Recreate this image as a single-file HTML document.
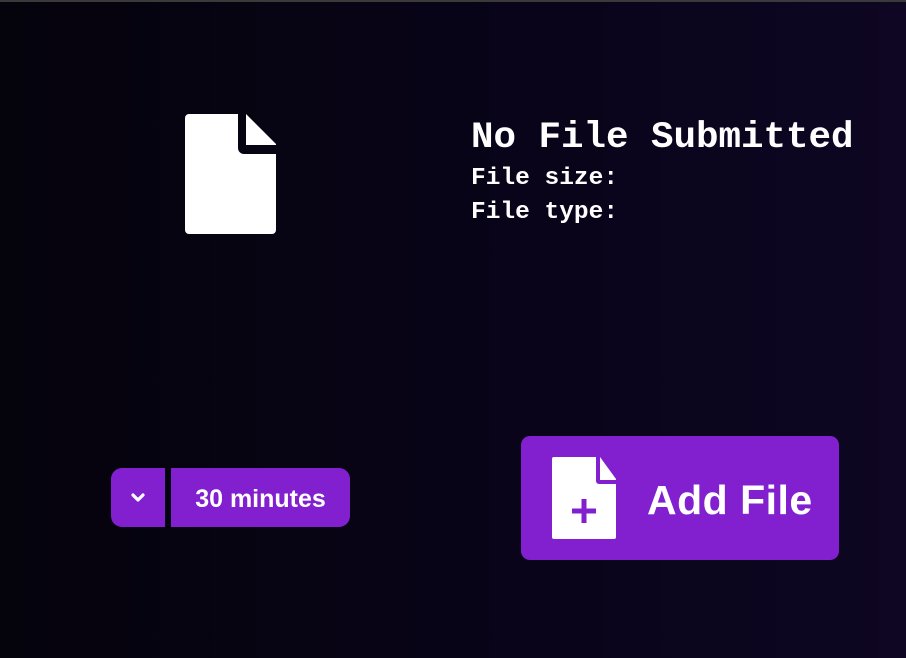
<!DOCTYPE html>
<html><head><style>
html,body{margin:0;padding:0;}
body{width:906px;height:658px;overflow:hidden;position:relative;background:linear-gradient(90deg,#05030c 0%,#09041a 60%,#0e0622 100%);border-top:2px solid #3a3a3a;box-sizing:border-box;font-family:"Liberation Sans",sans-serif;}
.mono{position:absolute;font-family:"Liberation Mono",monospace;font-weight:bold;color:#fff;white-space:nowrap;}
.btn{position:absolute;background:#8220cf;color:#fff;font-weight:bold;}
</style></head><body>
<svg style="position:absolute;left:185px;top:110px" width="92" height="124" viewBox="0 0 92 124">
<path d="M4 2 H53 V36 a6 6 0 0 0 6 6 H91 V118 a4 4 0 0 1 -4 4 H4 a4 4 0 0 1 -4 -4 V6 a4 4 0 0 1 4 -4 Z" fill="#fff"/>
<path d="M61 2 L91 32 V33 H61 Z" fill="#fff"/>
</svg>
<div class="mono" style="left:471px;top:114px;font-size:37.5px;line-height:44px;">No File Submitted</div>
<div class="mono" style="left:471px;top:163px;font-size:24.5px;line-height:28px;">File size:</div>
<div class="mono" style="left:471px;top:197px;font-size:24.5px;line-height:28px;">File type:</div>
<div class="btn" style="left:111px;top:466px;width:54px;height:59px;border-radius:11px 0 0 11px;">
<svg style="position:absolute;left:20px;top:24px" width="14" height="12" viewBox="0 0 14 12"><path d="M2 3 L7 8 L12 3" stroke="#fff" stroke-width="3.2" fill="none" stroke-linecap="round" stroke-linejoin="round"/></svg>
</div>
<div class="btn" style="left:171px;top:466px;width:179px;height:59px;border-radius:0 11px 11px 0;font-size:25px;line-height:63px;text-align:center;">30 minutes</div>
<div class="btn" style="left:521px;top:434px;width:318px;height:124px;border-radius:9px;">
<svg style="position:absolute;left:31px;top:21px" width="65" height="83" viewBox="0 0 65 83">
<path d="M2 0 H44 V24 a3 3 0 0 0 3 3 H64 V80 a2 2 0 0 1 -2 2 H2 a2 2 0 0 1 -2 -2 V2 a2 2 0 0 1 2 -2 Z" fill="#fff"/>
<path d="M48 0 L64 22 V23 H48 Z" fill="#fff"/>
<path d="M32 42 V66 M20 54 H44" stroke="#8220cf" stroke-width="5"/>
</svg>
<div style="position:absolute;left:126px;top:2px;line-height:124px;font-size:41px;letter-spacing:0.5px;">Add File</div>
</div>
</body></html>
